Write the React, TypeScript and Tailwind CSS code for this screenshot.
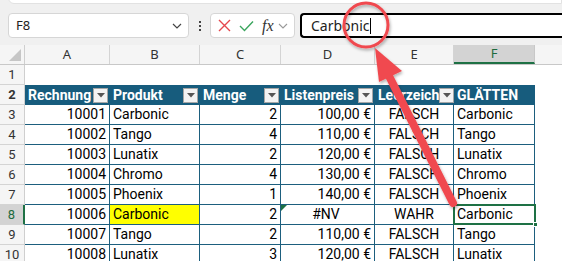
import React from 'react';

type Row = {
  n: number;
  rech: string;
  prod: string;
  menge: string;
  preis: string;
  leer: string;
  glatt: string;
};

const rows: Row[] = [
  { n: 3, rech: '10001', prod: 'Carbonic', menge: '2', preis: '100,00 €', leer: 'FALSCH', glatt: 'Carbonic' },
  { n: 4, rech: '10002', prod: 'Tango', menge: '4', preis: '110,00 €', leer: 'FALSCH', glatt: 'Tango' },
  { n: 5, rech: '10003', prod: 'Lunatix', menge: '2', preis: '120,00 €', leer: 'FALSCH', glatt: 'Lunatix' },
  { n: 6, rech: '10004', prod: 'Chromo', menge: '4', preis: '130,00 €', leer: 'FALSCH', glatt: 'Chromo' },
  { n: 7, rech: '10005', prod: 'Phoenix', menge: '1', preis: '140,00 €', leer: 'FALSCH', glatt: 'Phoenix' },
  { n: 8, rech: '10006', prod: 'Carbonic', menge: '2', preis: '#NV', leer: 'WAHR', glatt: 'Carbonic' },
  { n: 9, rech: '10007', prod: 'Tango', menge: '2', preis: '110,00 €', leer: 'FALSCH', glatt: 'Tango' },
  { n: 10, rech: '10008', prod: 'Lunatix', menge: '3', preis: '120,00 €', leer: 'FALSCH', glatt: 'Lunatix' },
];

const cols = [
  { key: 'A', w: 'w-[85px]' },
  { key: 'B', w: 'w-[90px]' },
  { key: 'C', w: 'w-[81px]' },
  { key: 'D', w: 'w-[94px]' },
  { key: 'E', w: 'w-[79px]' },
  { key: 'F', w: 'w-[81px]' },
];

function FilterBtn() {
  return (
    <span className="ml-auto mr-[2px] w-[15px] h-[15px] bg-[#f3f3f3] border border-[#a6a6a6] flex items-center justify-center shrink-0">
      <svg width="8" height="5" viewBox="0 0 8 5">
        <path d="M0 0 L8 0 L4 4.5 Z" fill="#555" />
      </svg>
    </span>
  );
}

function RowHead({ n, active }: { n: number | string; active?: boolean }) {
  return (
    <div
      className={`w-[25px] shrink-0 h-full flex items-center justify-center text-[13px] border-b border-[#d4d4d4] ${
        active
          ? 'bg-[#d3d3d3] text-[#1e6b3e] border-r-2 border-r-[#1e7145]'
          : 'bg-[#f5f5f5] text-[#333] border-r border-r-[#cfcfcf]'
      }`}
    >
      {n}
    </div>
  );
}

export default function App() {
  return (
    <div className="relative w-[562px] h-[261px] overflow-hidden bg-white" style={{ fontFamily: 'Roboto, "Noto Sans", sans-serif' }}>
      {/* ribbon + formula bar */}
      <div className="h-[45px] bg-[#f0f0f0] relative" style={{ fontFamily: '"Noto Sans", "Open Sans", sans-serif' }}>
        <div className="absolute left-[8px] right-0 top-[-6px] h-[10px] bg-white border border-[#e2e2e2] rounded-bl-[6px]" />
        <div className="flex items-center pt-[13px] h-[38px]">
          <div className="ml-[8px] w-[181px] h-[25px] bg-white border border-[#d6d6d6] rounded-[4px] flex items-center pl-[7px] pr-[6px]">
            <span className="text-[13px] text-[#222]">F8</span>
            <svg className="ml-auto" width="10" height="6" viewBox="0 0 10 6">
              <path d="M1 1 L5 5 L9 1" fill="none" stroke="#444" strokeWidth="1.2" />
            </svg>
          </div>
          <div className="w-[21px] flex flex-col items-center gap-[2px]">
            <span className="w-[2px] h-[2px] bg-[#444]" />
            <span className="w-[2px] h-[2px] bg-[#444]" />
            <span className="w-[2px] h-[2px] bg-[#444]" />
          </div>
          <div className="w-[85px] h-[25px] bg-white border border-[#d6d6d6] rounded-[4px] flex items-center pl-[7px] gap-[8px]">
            <svg width="13" height="13" viewBox="0 0 13 13">
              <path d="M1 1 L12 12 M12 1 L1 12" stroke="#e5484d" strokeWidth="1.4" />
            </svg>
            <svg width="15" height="12" viewBox="0 0 15 12">
              <path d="M1 6 L5.5 10.5 L14 1.5" fill="none" stroke="#3aa55d" strokeWidth="1.4" />
            </svg>
            <span className="text-[16px] italic text-[#333] leading-none" style={{ fontFamily: '"Liberation Serif", serif' }}>
              fx
            </span>
            <svg width="10" height="6" viewBox="0 0 10 6" className="-ml-[4px]">
              <path d="M1 1 L5 5 L9 1" fill="none" stroke="#999" strokeWidth="1.1" />
            </svg>
          </div>
          <div className="ml-[5px] flex-1 h-[25px] bg-white border-2 border-black rounded-l-[4px] border-r-0 flex items-center pl-[9px]">
            <span className="text-[14px] text-[#222]">Carbonic</span>
            <span className="w-px h-[16px] bg-black" />
          </div>
        </div>
      </div>

      {/* column headers */}
      <div className="flex h-[20px] bg-[#f5f5f5] border-b border-[#c8c8c8]" style={{ fontFamily: '"Noto Sans", "Open Sans", sans-serif' }}>
        <div className="w-[25px] shrink-0 h-full relative border-r border-[#cfcfcf]">
          <svg className="absolute right-[3px] bottom-[3px]" width="12" height="12" viewBox="0 0 12 12">
            <path d="M12 0 L12 12 L0 12 Z" fill="#c6c6c6" />
          </svg>
        </div>
        {cols.map((c) => (
          <div
            key={c.key}
            className={`${c.w} shrink-0 h-full flex items-center justify-center text-[13px] ${
              c.key === 'F'
                ? 'bg-[#d3d3d3] text-[#1e6b3e] border-b-2 border-[#1e7145] border-r border-r-[#c8c8c8]'
                : 'text-[#333] border-r border-[#d4d4d4]'
            }`}
          >
            {c.key}
          </div>
        ))}
        <div className="flex-1" />
      </div>

      {/* row 1 */}
      <div className="flex h-[20px]">
        <RowHead n={1} />
        <div className="flex-1" />
      </div>

      {/* table header row */}
      <div className="flex h-[20px] text-[14px] font-bold text-white">
        <RowHead n={2} />
        <div className="flex w-[510px] bg-[#175c7d]">
          {['Rechnung', 'Produkt', 'Menge', 'Listenpreis', 'Leerzeich', 'GLÄTTEN'].map((h, i) => (
            <div key={h} className={`${cols[i].w} shrink-0 h-full flex items-center pl-[3px] overflow-hidden whitespace-nowrap`}>
              <span>{h}</span>
              {i < 5 && <FilterBtn />}
            </div>
          ))}
        </div>
      </div>

      {/* data rows */}
      {rows.map((r) => {
        const active = r.n === 8;
        return (
          <div key={r.n} className="flex h-[20px] text-[14px] text-black">
            <RowHead n={r.n} active={active} />
            <div className="flex w-[510px] border-b border-[#1d5f7e]">
              <div className="w-[85px] shrink-0 flex items-center justify-end pr-[3px] border-r border-[#1d5f7e]">{r.rech}</div>
              <div className={`w-[90px] shrink-0 flex items-center pl-[3px] border-r border-[#1d5f7e] ${active ? 'bg-[#ffff00]' : ''}`}>{r.prod}</div>
              <div className="w-[81px] shrink-0 flex items-center justify-end pr-[3px] border-r border-[#1d5f7e] relative">
                {r.menge}
              </div>
              <div className={`w-[94px] shrink-0 flex items-center pr-[3px] border-r border-[#1d5f7e] relative ${r.preis === '#NV' ? 'justify-center' : 'justify-end'}`}>
                {r.preis === '#NV' && (
                  <svg className="absolute left-0 top-0" width="6" height="6" viewBox="0 0 6 6">
                    <path d="M0 0 L6 0 L0 6 Z" fill="#1e7145" />
                  </svg>
                )}
                {r.preis}
              </div>
              <div className="w-[79px] shrink-0 flex items-center justify-center border-r border-[#1d5f7e]">{r.leer}</div>
              <div className={`w-[81px] shrink-0 flex items-center pl-[3px] relative ${active ? 'outline-2 outline-[#1e7145] -outline-offset-1 z-10' : 'border-r border-[#1d5f7e]'}`}>
                {r.glatt}
                {active && <span className="absolute right-[-3px] bottom-[-3px] w-[5px] h-[5px] bg-[#1e7145] border border-white" />}
              </div>
            </div>
          </div>
        );
      })}

      {/* annotation: circle and arrow */}
      <svg className="absolute inset-0 pointer-events-none z-20" width="562" height="261" viewBox="0 0 562 261">
        <defs>
          <filter id="sh" x="-20%" y="-20%" width="140%" height="140%">
            <feDropShadow dx="1" dy="2" stdDeviation="1.5" floodColor="#000" floodOpacity="0.3" />
          </filter>
        </defs>
        <circle cx="366" cy="25" r="22" fill="none" stroke="#f04a4f" strokeWidth="3" filter="url(#sh)" />
        <g filter="url(#sh)">
          <line x1="453" y1="203" x2="386" y2="70" stroke="#f04a4f" strokeWidth="8" strokeLinecap="round" />
          <path d="M375 48 L402 71 L379 82 Z" fill="#f04a4f" />
        </g>
      </svg>
    </div>
  );
}
